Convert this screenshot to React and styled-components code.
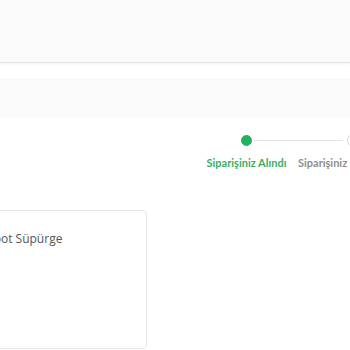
import React from "react";
import styled, { createGlobalStyle } from "styled-components";

const GlobalStyle = createGlobalStyle`
  html, body {
    margin: 0;
    padding: 0;
    background: #fff;
    overflow: hidden;
    font-family: "Open Sans", "Liberation Sans", sans-serif;
  }
`;

const steps = [
  { label: "Siparişiniz Alındı", done: true },
  { label: "Siparişiniz Hazırlanıyor", done: false },
  { label: "Kargoya Verildi", done: false },
];

export default function App() {
  return (
    <>
      <GlobalStyle />
      <Header />
      <Band />
      <Stepper>
        {steps.map((s, i) => (
          <Step key={s.label} last={i === steps.length - 1}>
            <DotWrap>
              <Dot done={s.done} />
            </DotWrap>
            <Label done={s.done}>{s.label}</Label>
          </Step>
        ))}
      </Stepper>
      <Card>
        <ProductName>Robot Süpürge</ProductName>
      </Card>
    </>
  );
}

const Header = styled.div`
  height: 62px;
  background: #fafafa;
  border-bottom: 1px solid #e6e6e6;
  box-shadow: 0 1px 2px rgba(0, 0, 0, 0.05);
`;

const Band = styled.div`
  height: 39px;
  margin-top: 15px;
  background: #fafafa;
`;

const Stepper = styled.div`
  display: flex;
  padding-left: 195px;
  margin-top: 17px;
`;

const Step = styled.div`
  position: relative;
  flex: 0 0 103px;
  display: flex;
  flex-direction: column;
  align-items: center;
  &::after {
    content: "";
    display: ${(p) => (p.last ? "none" : "block")};
    position: absolute;
    top: 6px;
    left: calc(50% + 7px);
    width: calc(100% - 14px);
    height: 1px;
    background: #e3e3e3;
  }
`;

const DotWrap = styled.div`
  height: 13px;
  display: flex;
  align-items: center;
`;

const Dot = styled.span`
  width: ${(p) => (p.done ? "11px" : "13px")};
  height: ${(p) => (p.done ? "11px" : "13px")};
  border-radius: 50%;
  box-sizing: border-box;
  background: ${(p) => (p.done ? "#1fb35c" : "#fff")};
  border: 1px solid ${(p) => (p.done ? "#1fb35c" : "#d9d9d9")};
`;

const Label = styled.span`
  margin-top: 8px;
  font-family: Lato, "Open Sans", sans-serif;
  font-size: 11px;
  line-height: 15px;
  font-weight: 700;
  white-space: nowrap;
  color: ${(p) => (p.done ? "#3dae63" : "#8f8f8f")};
`;

const Card = styled.div`
  margin: 40px 0 0 -38px;
  width: 185px;
  height: 139px;
  box-sizing: border-box;
  padding: 19px 16px;
  background: #fff;
  border: 1px solid #e8e8e8;
  border-radius: 4px;
`;

const ProductName = styled.div`
  font-size: 12px;
  line-height: 18px;
  color: #555;
`;
